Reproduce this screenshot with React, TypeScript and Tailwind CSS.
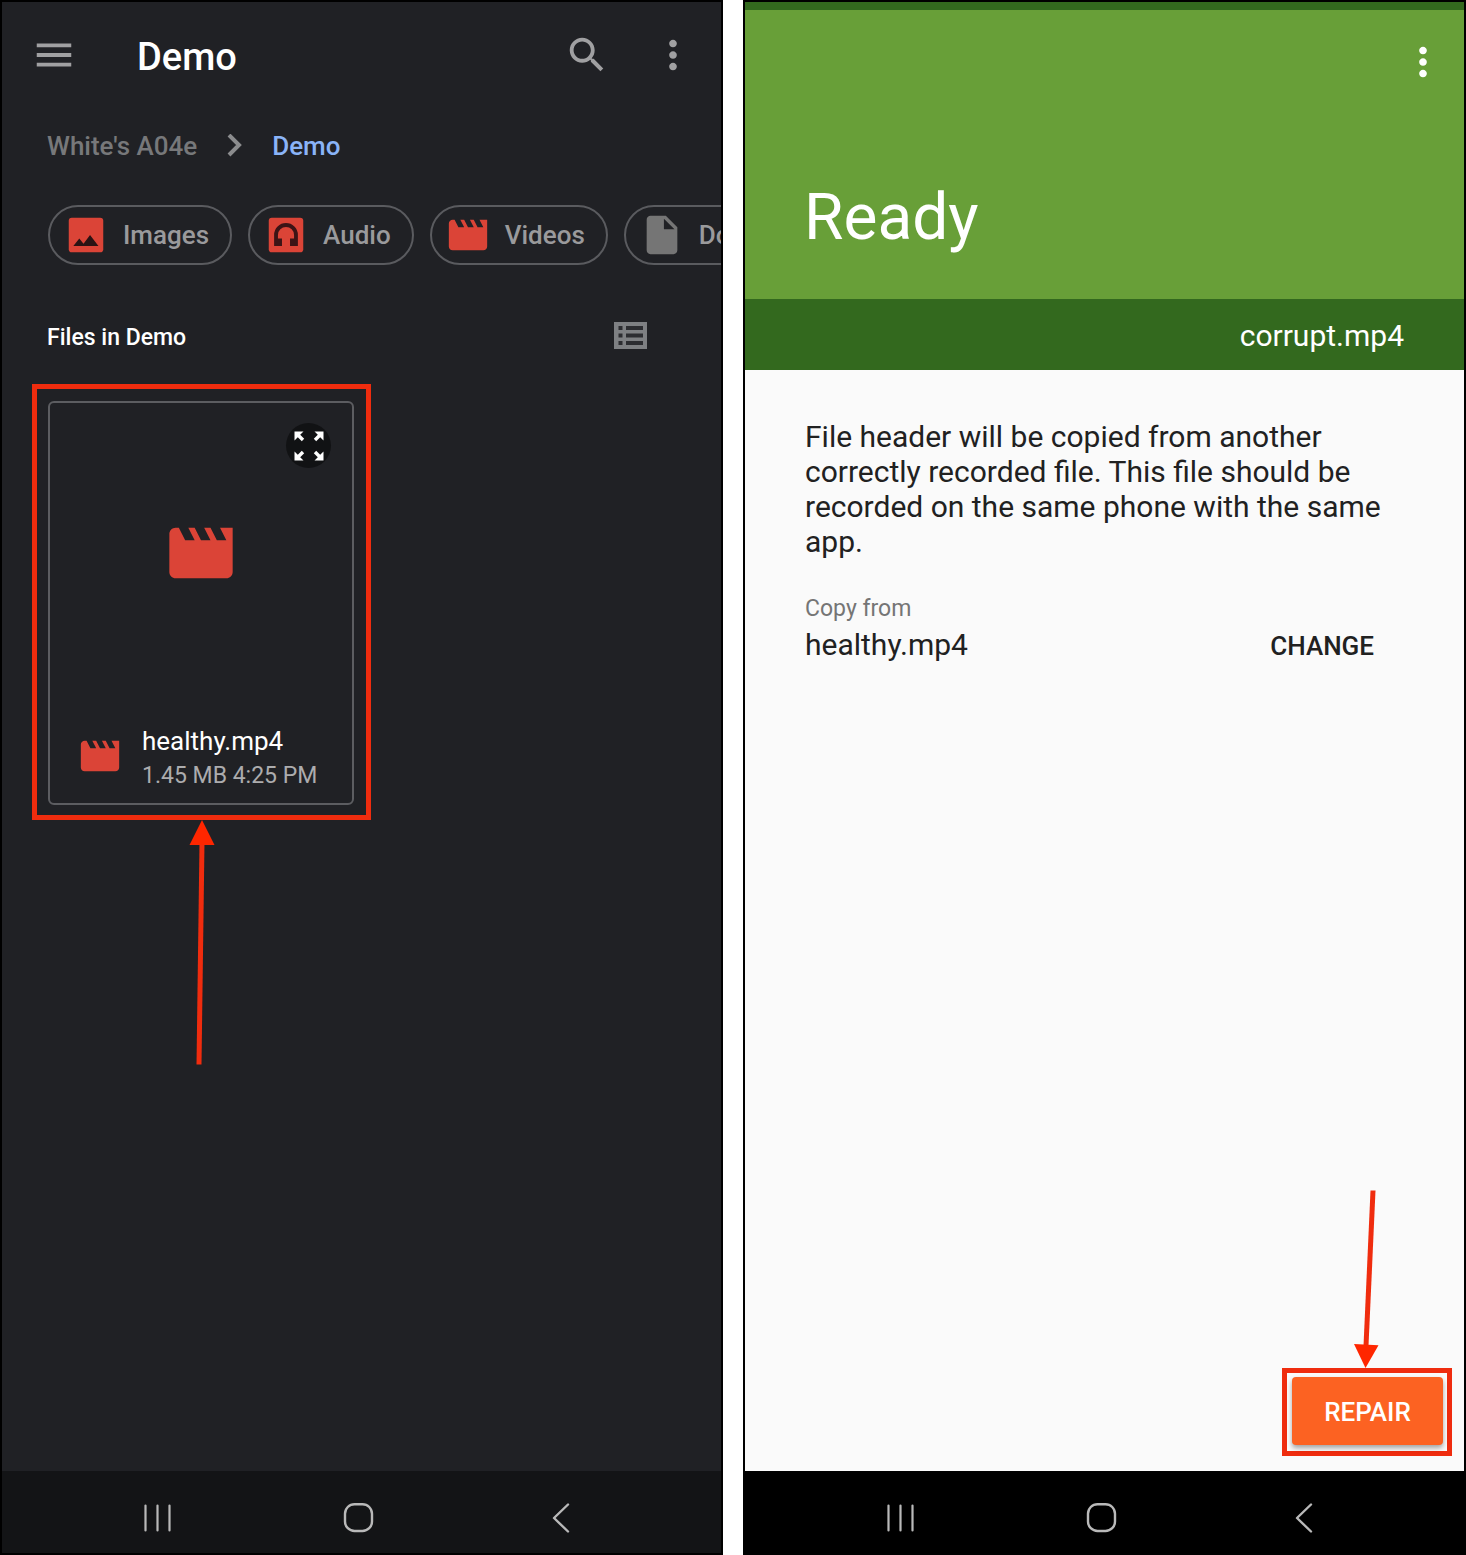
import type { ReactNode } from "react";

const MOVIE =
  "M18 4l2 4h-3l-2-4h-2l2 4h-3l-2-4H8l2 4H7L5 4H4c-1.1 0-1.99.9-1.99 2L2 18c0 1.1.9 2 2 2h16c1.1 0 2-.9 2-2V4h-4z";
const MENU = "M3 18h18v-2H3v2zm0-5h18v-2H3v2zm0-7v2h18V6H3z";
const SEARCH =
  "M15.5 14h-.79l-.28-.27C15.41 12.59 16 11.11 16 9.5 16 5.91 13.09 3 9.5 3S3 5.91 3 9.5 5.91 16 9.5 16c1.61 0 3.09-.59 4.23-1.57l.27.28v.79l5 4.99L20.49 19l-4.99-5zm-6 0C7.01 14 5 11.99 5 9.5S7.01 5 9.5 5 14 7.01 14 9.5 11.99 14 9.5 14z";
const MORE =
  "M12 8c1.1 0 2-.9 2-2s-.9-2-2-2-2 .9-2 2 .9 2 2 2zm0 2c-1.1 0-2 .9-2 2s.9 2 2 2 2-.9 2-2-.9-2-2-2zm0 6c-1.1 0-2 .9-2 2s.9 2 2 2 2-.9 2-2-.9-2-2-2z";
const DOCUMENT =
  "M6 2c-1.1 0-1.99.9-1.99 2L4 20c0 1.1.89 2 1.99 2H18c1.1 0 2-.9 2-2V8l-6-6H6zm7 7V3.5L18.5 9H13z";

function Glyph({ d, className }: { d: string; className: string }) {
  return (
    <svg viewBox="0 0 24 24" fill="currentColor" aria-hidden="true" className={`shrink-0 ${className}`}>
      <path d={d} />
    </svg>
  );
}

function ImageIcon() {
  return (
    <svg viewBox="0 0 24 24" aria-hidden="true" className="size-[46px] shrink-0">
      <rect x="3" y="3" width="18" height="18" rx="1.6" fill="#db4437" />
      <path d="M5.4 17.8l3.1-4 2.2 2.7 3.4-4.5 4.4 5.8z" fill="#2b1314" />
    </svg>
  );
}

function AudioIcon() {
  return (
    <svg viewBox="0 0 24 24" aria-hidden="true" className="size-[46px] shrink-0">
      <rect x="3" y="3" width="18" height="18" rx="1.6" fill="#db4437" />
      <path
        d="M5.8 17.8V12a6.2 6.2 0 0 1 12.4 0v5.8h-4.1v-4h2.1V12a4.2 4.2 0 0 0-8.4 0v1.800h2.100v4z"
        fill="#3c1416"
      />
    </svg>
  );
}

function Chip({ icon, label }: { icon: ReactNode; label: string }) {
  return (
    <button
      type="button"
      className="flex h-[60px] shrink-0 items-center gap-[14px] rounded-full border-2 border-[#5a5b5f] pr-[21px] pl-[13px] text-[26px] font-medium text-[#9a9a9c]"
    >
      {icon}
      {label}
    </button>
  );
}

function NavBar({ className }: { className: string }) {
  return (
    <nav className={`flex h-[82px] shrink-0 justify-center pt-3 pr-[6px] text-[#b9b9b9] ${className}`}>
      <button type="button" aria-label="Recent apps" className="flex w-[202px] items-center justify-center">
        <svg viewBox="0 0 32 32" fill="none" stroke="currentColor" strokeWidth="2.2" strokeLinecap="round" className="size-8">
          <path d="M4.500 3.500v25M16.500 3.500v25M28.500 3.500v25" />
        </svg>
      </button>
      <button type="button" aria-label="Home" className="flex w-[202px] items-center justify-center">
        <svg viewBox="0 0 32 32" fill="none" stroke="currentColor" strokeWidth="2.4" className="size-8">
          <rect x="2" y="2.200" width="27" height="26.800" rx="9.500" />
        </svg>
      </button>
      <button type="button" aria-label="Back" className="flex w-[202px] items-center justify-center">
        <svg viewBox="0 0 32 32" fill="none" stroke="currentColor" strokeWidth="2.4" strokeLinecap="round" strokeLinejoin="round" className="size-8">
          <path d="M23 2.500L9 16l14 13.500" />
        </svg>
      </button>
    </nav>
  );
}

function FilesScreen() {
  return (
    <section className="flex min-w-0 flex-1 flex-col border-2 border-black bg-[#202125]">
      <header className="flex h-[76px] items-end pr-[25px] pl-[29px] text-[#a0a0a2]">
        <button type="button" aria-label="Menu">
          <Glyph d={MENU} className="size-[46px]" />
        </button>
        <h1 className="ml-[60px] flex-1 text-[38px] leading-[42px] font-medium text-white">Demo</h1>
        <div className="flex gap-10">
          <button type="button" aria-label="Search">
            <Glyph d={SEARCH} className="size-[46px]" />
          </button>
          <button type="button" aria-label="More options">
            <Glyph d={MORE} className="size-[46px]" />
          </button>
        </div>
      </header>

      <div className="mt-[52px] flex items-center pl-[45px] text-[26px] leading-8 font-medium text-[#77787a]">
        <a href="#device">White's A04e</a>
        <svg viewBox="0 0 16 24" fill="none" stroke="#8b8c8e" strokeWidth="4" aria-hidden="true" className="mr-[29px] ml-[30px] h-6 w-4">
          <path d="M2 1l10 10L2 21" />
        </svg>
        <a href="#demo" className="text-[#8ab4f8]">
          Demo
        </a>
      </div>

      <div className="mt-[43px] flex gap-4 overflow-hidden pl-[46px]">
        <Chip icon={<ImageIcon />} label="Images" />
        <Chip icon={<AudioIcon />} label="Audio" />
        <Chip icon={<Glyph d={MOVIE} className="size-[46px] text-[#db4437]" />} label="Videos" />
        <Chip icon={<Glyph d={DOCUMENT} className="size-[46px] text-[#757575]" />} label="Documents" />
      </div>

      <div className="mt-[55px] flex items-start justify-between pr-[74px] pl-[45px]">
        <h2 className="pt-[2px] text-[23px] leading-8 font-medium text-white">Files in Demo</h2>
        <button type="button" aria-label="List view" className="pt-[2px]">
          <svg viewBox="0 0 33 27" className="h-[27px] w-[33px]">
            <rect width="33" height="27" fill="#7e8083" />
            <path
              d="M4.500 4h4v4h-4zM4.500 11.500h4v4h-4zM4.500 19h4v4h-4zM12 4h17v4H12zM12 11.500h17v4H12zM12 19h17v4H12z"
              fill="#2c2d31"
            />
          </svg>
        </button>
      </div>

      <div className="mt-[30px] flex flex-1 flex-col pl-[30px]">
        <div className="w-[339px] border-5 border-[#ef2c0e] pt-3 pr-3 pb-[10px] pl-[11px]">
          <article className="relative flex h-[404px] flex-col rounded-md border-2 border-[#5c5d61]">
            <button
              type="button"
              aria-label="Preview"
              className="absolute top-5 right-[21px] flex size-[45px] items-center justify-center rounded-full bg-[#111214] text-white"
            >
              <svg viewBox="0 0 30 30" fill="currentColor" className="size-[30px]">
                <path d="M.5.5h9L6.200 3.800l4 4-2.400 2.400-4-4L.5 9.500z" />
                <path d="M29.500.5v9l-3.300-3.300-4 4-2.400-2.400 4-4L20.500.5z" />
                <path d="M.5 29.500v-9l3.300 3.300 4-4 2.400 2.400-4 4 3.300 3.300z" />
                <path d="M29.500 29.500h-9l3.300-3.300-4-4 2.400-2.400 4 4 3.300-3.300z" />
              </svg>
            </button>
            <div className="flex h-[300px] items-center justify-center">
              <Glyph d={MOVIE} className="size-[76px] text-[#db4437]" />
            </div>
            <div className="flex items-start gap-[19px] pt-[21px] pl-[27px]">
              <div className="pt-[9px]">
                <Glyph d={MOVIE} className="size-[46px] text-[#db4437]" />
              </div>
              <div>
                <p className="text-[26px] leading-[34px] text-white">healthy.mp4</p>
                <p className="text-[23px] leading-9 text-[#acacae]">1.45 MB 4:25 PM</p>
              </div>
            </div>
          </article>
        </div>
        <svg viewBox="0 0 40 245" aria-hidden="true" className="ml-[150px] h-[245px] w-10">
          <path d="M20 22L17 244.500" stroke="#f02c0e" strokeWidth="5" />
          <path d="M20 0l12.500 25h-25z" fill="#ff2600" />
        </svg>
      </div>

      <NavBar className="bg-[#131416]" />
    </section>
  );
}

function RepairScreen() {
  return (
    <section className="flex min-w-0 flex-1 flex-col border-2 border-black bg-[#fafafa] text-[#212121]">
      <header className="flex h-[297px] flex-col border-t-8 border-[#33691e] bg-[#689f38] text-white">
        <button type="button" aria-label="More options" className="mt-[29px] mr-[18px] self-end">
          <Glyph d={MORE} className="size-[46px]" />
        </button>
        <h1 className="mt-[95px] pl-[59px] text-[64px] leading-[76px]">Ready</h1>
      </header>
      <div className="flex h-[71px] items-center justify-end bg-[#33691e] pt-[2px] pr-[60px] text-[30px] text-white">
        corrupt.mp4
      </div>

      <main className="flex flex-1 flex-col">
        <div className="px-[60px] pt-[49px]">
          <p className="text-[30px] leading-[35px]">
            File header will be copied from another correctly recorded file. This file should be recorded on the same
            phone with the same app.
          </p>
          <div className="mt-[35px] flex items-end justify-between">
            <div>
              <p className="text-[23px] leading-[30px] text-[#757575]">Copy from</p>
              <p className="mt-[3px] text-[30px] leading-[36px]">healthy.mp4</p>
            </div>
            <button type="button" className="mr-[30px] text-[26px] leading-[34px] font-medium">
              CHANGE
            </button>
          </div>
        </div>

        <div className="mt-auto mr-3 mb-[15px] flex flex-col items-center self-end">
          <svg viewBox="0 0 40 178" aria-hidden="true" className="h-[178px] w-10">
            <path d="M26 0.500L19 156" stroke="#f02c0e" strokeWidth="5" />
            <path d="M18.500 178L7 154l24.500 1.200z" fill="#ff2600" />
          </svg>
          <div className="border-5 border-[#ef2c0e] pt-1 pr-1 pb-[6px] pl-[5px]">
            <button
              type="button"
              className="h-[68px] w-[151px] rounded-sm bg-[#fc6222] pt-[2px] text-[26px] font-medium text-white shadow-[0_3px_5px_rgba(0,0,0,0.35)]"
            >
              REPAIR
            </button>
          </div>
        </div>
      </main>

      <NavBar className="bg-black" />
    </section>
  );
}

export default function App() {
  return (
    <div className="flex min-h-screen gap-5 bg-white font-[Roboto,sans-serif]">
      <FilesScreen />
      <RepairScreen />
    </div>
  );
}
